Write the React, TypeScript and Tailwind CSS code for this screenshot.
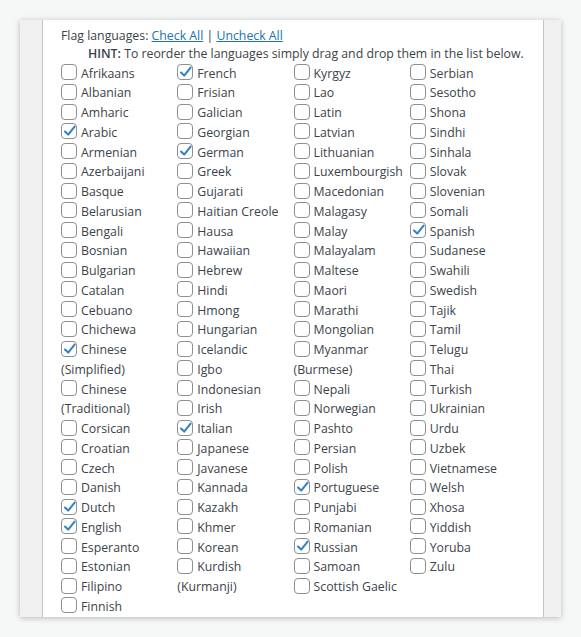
import React from 'react';

type Lang = { name: string; checked?: boolean };

const COLUMNS: Lang[][] = [
  [
    { name: 'Afrikaans' },
    { name: 'Albanian' },
    { name: 'Amharic' },
    { name: 'Arabic', checked: true },
    { name: 'Armenian' },
    { name: 'Azerbaijani' },
    { name: 'Basque' },
    { name: 'Belarusian' },
    { name: 'Bengali' },
    { name: 'Bosnian' },
    { name: 'Bulgarian' },
    { name: 'Catalan' },
    { name: 'Cebuano' },
    { name: 'Chichewa' },
    { name: 'Chinese (Simplified)', checked: true },
    { name: 'Chinese (Traditional)' },
    { name: 'Corsican' },
    { name: 'Croatian' },
    { name: 'Czech' },
    { name: 'Danish' },
    { name: 'Dutch', checked: true },
    { name: 'English', checked: true },
    { name: 'Esperanto' },
    { name: 'Estonian' },
    { name: 'Filipino' },
    { name: 'Finnish' },
  ],
  [
    { name: 'French', checked: true },
    { name: 'Frisian' },
    { name: 'Galician' },
    { name: 'Georgian' },
    { name: 'German', checked: true },
    { name: 'Greek' },
    { name: 'Gujarati' },
    { name: 'Haitian Creole' },
    { name: 'Hausa' },
    { name: 'Hawaiian' },
    { name: 'Hebrew' },
    { name: 'Hindi' },
    { name: 'Hmong' },
    { name: 'Hungarian' },
    { name: 'Icelandic' },
    { name: 'Igbo' },
    { name: 'Indonesian' },
    { name: 'Irish' },
    { name: 'Italian', checked: true },
    { name: 'Japanese' },
    { name: 'Javanese' },
    { name: 'Kannada' },
    { name: 'Kazakh' },
    { name: 'Khmer' },
    { name: 'Korean' },
    { name: 'Kurdish (Kurmanji)' },
  ],
  [
    { name: 'Kyrgyz' },
    { name: 'Lao' },
    { name: 'Latin' },
    { name: 'Latvian' },
    { name: 'Lithuanian' },
    { name: 'Luxembourgish' },
    { name: 'Macedonian' },
    { name: 'Malagasy' },
    { name: 'Malay' },
    { name: 'Malayalam' },
    { name: 'Maltese' },
    { name: 'Maori' },
    { name: 'Marathi' },
    { name: 'Mongolian' },
    { name: 'Myanmar (Burmese)' },
    { name: 'Nepali' },
    { name: 'Norwegian' },
    { name: 'Pashto' },
    { name: 'Persian' },
    { name: 'Polish' },
    { name: 'Portuguese', checked: true },
    { name: 'Punjabi' },
    { name: 'Romanian' },
    { name: 'Russian', checked: true },
    { name: 'Samoan' },
    { name: 'Scottish Gaelic' },
  ],
  [
    { name: 'Serbian' },
    { name: 'Sesotho' },
    { name: 'Shona' },
    { name: 'Sindhi' },
    { name: 'Sinhala' },
    { name: 'Slovak' },
    { name: 'Slovenian' },
    { name: 'Somali' },
    { name: 'Spanish', checked: true },
    { name: 'Sudanese' },
    { name: 'Swahili' },
    { name: 'Swedish' },
    { name: 'Tajik' },
    { name: 'Tamil' },
    { name: 'Telugu' },
    { name: 'Thai' },
    { name: 'Turkish' },
    { name: 'Ukrainian' },
    { name: 'Urdu' },
    { name: 'Uzbek' },
    { name: 'Vietnamese' },
    { name: 'Welsh' },
    { name: 'Xhosa' },
    { name: 'Yiddish' },
    { name: 'Yoruba' },
    { name: 'Zulu' },
  ],
];

const Checkbox = ({ checked }: { checked?: boolean }) => (
  <span className="relative inline-block w-4 h-4 align-middle -mt-1 mr-1 rounded-[4px] border border-[#8c8f94] bg-white">
    {checked && (
      <svg className="absolute -left-px -top-[2px] w-[18px] h-[18px]" viewBox="0 0 18 18" fill="none">
        <path d="M4 9.5 L7.2 12.6 L13.6 4.6" stroke="#3582c4" strokeWidth="2.1" strokeLinecap="round" strokeLinejoin="round" />
      </svg>
    )}
  </span>
);

export default function App() {
  return (
    <div
      className="min-h-[637px] bg-[#f6f7f7] p-5 text-[12.3px] leading-[19.75px] text-[#3c434a]"
      style={{ fontFamily: '"Open Sans", "Noto Sans", sans-serif' }}
    >
      <div className="flex w-[541px] shadow-[0_1px_6px_rgba(0,0,0,0.25)]">
        <div className="w-[23px] shrink-0 bg-[#f0f0f0] border-r border-[#c3c4c7]" />
        <div className="flex-1 bg-white pl-[18px] pr-[17px] pt-[6px] pb-0">
          <div>
            Flag languages:{' '}
            <a className="text-[#2271b1] underline">Check All</a> |{' '}
            <a className="text-[#2271b1] underline">Uncheck All</a>
          </div>
          <div className="pl-[27px] -mt-[2px]">
            <strong className="font-semibold">HINT:</strong> To reorder the languages simply drag and drop them in the list below.
          </div>
          <div className="grid grid-cols-4">
            {COLUMNS.map((col, i) => (
              <div key={i} className="flex flex-col">
                {col.map(l => (
                  <div key={l.name} className="pr-1">
                    <Checkbox checked={l.checked} />
                    {l.name}
                  </div>
                ))}
              </div>
            ))}
          </div>
        </div>
        <div className="w-[18px] shrink-0 bg-[#f0f0f0] border-l border-[#c3c4c7]" />
      </div>
    </div>
  );
}
